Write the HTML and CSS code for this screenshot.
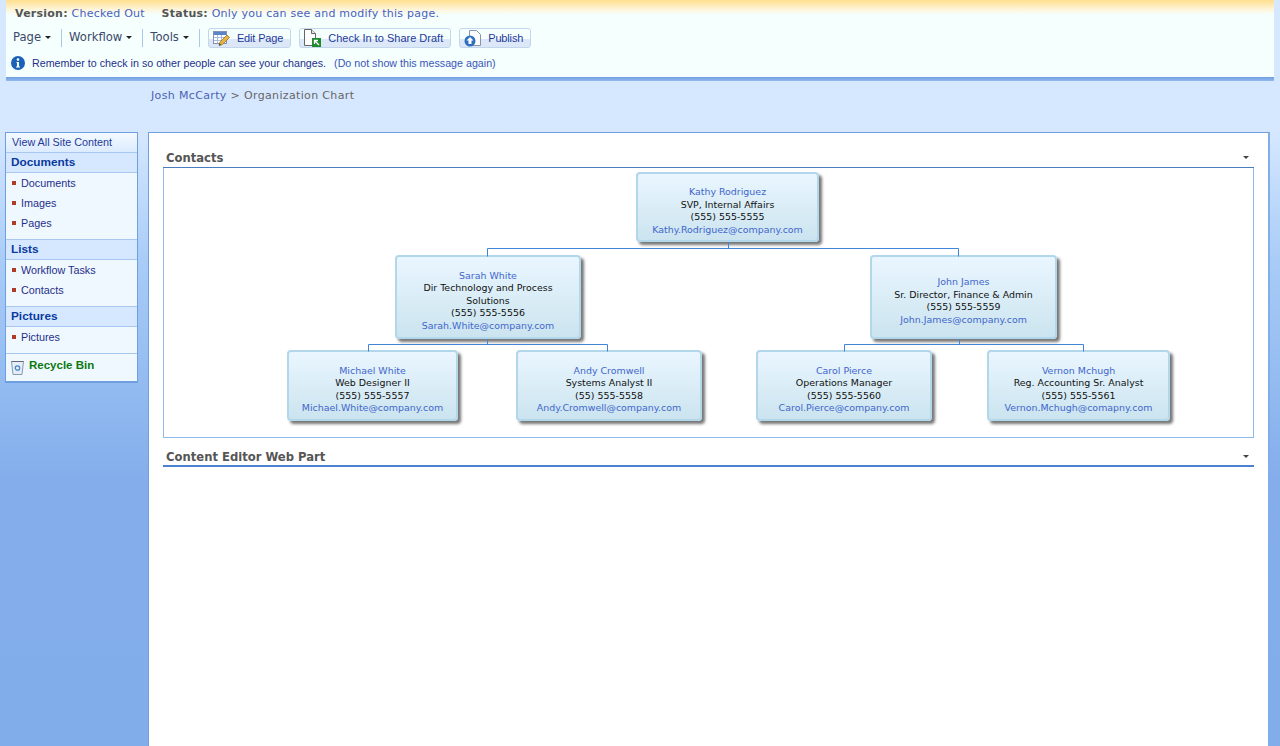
FILE: index.html
```html
<!DOCTYPE html>
<html lang="en">
<head>
    <meta charset="UTF-8">
    <title>Organization Chart</title>
    <link rel="stylesheet" href="styles.css">
</head>
<body>
    <div class="console">
        <div class="status-line">
            <b>Version:</b> <span class="status-val">Checked Out</span>
            <b class="status-gap">Status:</b> <span class="status-val">Only you can see and modify this page.</span>
        </div>
        <div class="toolbar">
            <span class="menu">Page <i class="caret"></i></span>
            <span class="menu">Workflow <i class="caret"></i></span>
            <span class="menu last">Tools <i class="caret"></i></span>
            <span class="btn tight">
                <svg width="17" height="16" viewBox="0 0 17 16"><rect x=".5" y="1.500" width="13" height="12" fill="#fff" stroke="#7f93b4"/><rect x="1" y="2" width="12" height="3" fill="#5b83c6"/><path d="M1 7.500h12M1 10.500h12M4.500 5v8M8.500 5v8" stroke="#a9bcd8"/><path d="M6 15.500l1-3.500 7-7 2.500 2.500-7 7z" fill="#e9b23f" stroke="#8b6b22" stroke-width=".7"/><path d="M6 15.500l.6-2 1.400 1.400z" fill="#333"/></svg>
                Edit Page
            </span>
            <span class="btn">
                <svg width="17" height="18" viewBox="0 0 17 18"><path d="M.5.500h7l4 4v12h-11z" fill="#fff" stroke="#666"/><path d="M7.500.500v4h4" fill="#e6e6e6" stroke="#666"/><rect x="8" y="9" width="9" height="9" fill="#1f8a2e"/><path d="M15 16l-4-4M10.500 15v-3.500h3.500" stroke="#fff" stroke-width="1.300" fill="none"/></svg>
                Check In to Share Draft
            </span>
            <span class="btn tight">
                <svg width="17" height="17" viewBox="0 0 17 17"><path d="M5.500.500h7l4 4v11h-11z" fill="#fff" stroke="#8a94a8"/><circle cx="6" cy="11" r="5.500" fill="#2f6fc0"/><path d="M6 7l3.500 3.500h-2v3.500h-3v-3.500h-2z" fill="#fff"/></svg>
                Publish
            </span>
        </div>
        <div class="notice">
            <svg width="14" height="14" viewBox="0 0 14 14"><circle cx="7" cy="7" r="7" fill="#1a62b8"/><circle cx="7" cy="3.600" r="1.300" fill="#fff"/><path d="M5.500 6h2.500v4.500h1v1h-4v-1h1v-3.500h-.500z" fill="#fff"/></svg>
            <span class="notice-text">Remember to check in so other people can see your changes.</span>
            <span class="notice-link">(Do not show this message again)</span>
        </div>
    </div>
    <div class="console-shadow"></div>

    <div class="crumbs"><span class="crumb-link">Josh McCarty</span> &gt; Organization Chart</div>

    <div class="page">
        <nav class="side">
            <div class="side-top">View All Site Content</div>
            <div class="side-head">Documents</div>
            <ul class="side-list">
                <li>Documents</li>
                <li>Images</li>
                <li>Pages</li>
            </ul>
            <div class="side-head">Lists</div>
            <ul class="side-list">
                <li>Workflow Tasks</li>
                <li>Contacts</li>
            </ul>
            <div class="side-head">Pictures</div>
            <ul class="side-list">
                <li>Pictures</li>
            </ul>
            <div class="recycle">
                <svg width="13" height="15" viewBox="0 0 13 15"><path d="M.5 1.500h12l-1.500 13h-9z" fill="#e4eef8" stroke="#8a9ab0"/><path d="M.5 1.500h12" stroke="#667"/><circle cx="6.500" cy="8" r="2.200" fill="none" stroke="#4a86c8" stroke-width="1.300"/></svg>
                <span>Recycle Bin</span>
            </div>
        </nav>

        <main class="content">
            <div class="part-title">
                <span>Contacts</span>
                <i class="caret dark"></i>
            </div>
            <div class="chart">
                <svg class="lines" width="1089" height="269" viewBox="0 0 1089 269">
                    <path d="M564.500 74v6.500M323.500 80.500h471M323.500 80.500v8M794.500 80.500v8M323.500 171v5.500M204.500 176.500h239M204.500 176.500v7M443.500 176.500v7M795.500 171v5.500M680.500 176.500h239M680.500 176.500v7M919.500 176.500v7" fill="none" stroke="#3f86d8"/>
                </svg>
                <div class="node n-kathy">
                    <span class="name">Kathy Rodriguez</span>
                    <span>SVP, Internal Affairs</span>
                    <span>(555) 555-5555</span>
                    <span class="name">Kathy.Rodriguez@company.com</span>
                </div>
                <div class="node n-sarah">
                    <span class="name">Sarah White</span>
                    <span>Dir Technology and Process Solutions</span>
                    <span>(555) 555-5556</span>
                    <span class="name">Sarah.White@company.com</span>
                </div>
                <div class="node n-john">
                    <span class="name">John James</span>
                    <span>Sr. Director, Finance &amp; Admin</span>
                    <span>(555) 555-5559</span>
                    <span class="name">John.James@company.com</span>
                </div>
                <div class="node n-michael">
                    <span class="name">Michael White</span>
                    <span>Web Designer II</span>
                    <span>(555) 555-5557</span>
                    <span class="name">Michael.White@company.com</span>
                </div>
                <div class="node n-andy">
                    <span class="name">Andy Cromwell</span>
                    <span>Systems Analyst II</span>
                    <span>(55) 555-5558</span>
                    <span class="name">Andy.Cromwell@company.com</span>
                </div>
                <div class="node n-carol">
                    <span class="name">Carol Pierce</span>
                    <span>Operations Manager</span>
                    <span>(555) 555-5560</span>
                    <span class="name">Carol.Pierce@company.com</span>
                </div>
                <div class="node n-vernon">
                    <span class="name">Vernon Mchugh</span>
                    <span>Reg. Accounting Sr. Analyst</span>
                    <span>(555) 555-5561</span>
                    <span class="name">Vernon.Mchugh@comapny.com</span>
                </div>
            </div>
            <div class="part-title second">
                <span>Content Editor Web Part</span>
                <i class="caret dark"></i>
            </div>
        </main>
    </div>
</body>
</html>
```

FILE: styles.css
```css
body {
    margin: 0;
    height: 746px;
    overflow: hidden;
    display: flex;
    flex-direction: column;
    font-family: "DejaVu Sans", Verdana, sans-serif;
    font-size: 10px;
    background: linear-gradient(#d6e8ff 0, #d6e8ff 130px, #a9ccf7 260px, #90b9f0 400px, #83aeeb 480px, #82adeb 746px);
}
.console {
    margin: 0 6px;
    height: 77px;
    box-sizing: border-box;
    background: linear-gradient(#ffdf8e 0, #fdf6de 10px, #f5fffe 15px);
    padding-top: 7px;
}
.console-shadow {
    margin: 0 6px;
    height: 4px;
    background: linear-gradient(#6f9fe4, #93b9ee);
}
.status-line {
    padding-left: 9px;
    height: 14px;
    line-height: 14px;
    font-size: 11px;
    letter-spacing: .24px;
}
.status-line b {
    color: #555;
}
.status-line .status-gap {
    margin-left: 13px;
}
.status-val {
    color: #4a5fc0;
}
.toolbar {
    display: flex;
    align-items: center;
    height: 22px;
    margin-top: 6px;
    padding-left: 1px;
    font-family: "Liberation Sans", Arial, sans-serif;
    font-size: 11px;
}
.menu {
    display: flex;
    align-items: center;
    gap: 4px;
    height: 18px;
    box-sizing: border-box;
    padding: 0 10px 2px 6px;
    color: #3a4a6a;
    border-right: 1px solid #a9c8ec;
    font-family: "DejaVu Sans", sans-serif;
    font-size: 11.600px;
}
.menu + .menu {
    padding-left: 7px;
}
.menu.last {
    margin-right: 8px;
}
.caret {
    display: inline-block;
    width: 0;
    height: 0;
    border: 3px solid transparent;
    border-top: 3px solid #222;
    border-bottom: 0;
}
.caret.dark {
    border-top-color: #444;
}
.btn {
    display: flex;
    align-items: center;
    height: 20px;
    box-sizing: border-box;
    border: 1px solid #c4d6ec;
    border-radius: 3px;
    background: linear-gradient(#f5fffe 55%, #dce8f8 55%);
    color: #1f3a9a;
    margin-right: 8px;
    padding: 0 7px 0 4px;
    gap: 7px;
}
.btn.tight {
    letter-spacing: -.15px;
}
.notice {
    display: flex;
    align-items: center;
    margin-top: 7px;
    padding-left: 5px;
    height: 14px;
    font-family: "Liberation Sans", Arial, sans-serif;
    font-size: 10.700px;
}
.notice-text {
    margin-left: 7px;
    color: #1f2f8a;
}
.notice-link {
    margin-left: 8px;
    color: #3a55b8;
}
.crumbs {
    margin-left: 151px;
    margin-top: 8px;
    height: 14px;
    line-height: 14px;
    font-size: 11px;
    letter-spacing: .35px;
    color: #666;
}
.crumb-link {
    color: #4a62b0;
}
.page {
    flex: 1;
    display: flex;
    align-items: stretch;
    min-height: 0;
    margin-top: 29px;
    padding-left: 5px;
}
.side {
    align-self: flex-start;
    width: 133px;
    box-sizing: border-box;
    border: 1px solid #6f9fe0;
    border-bottom-width: 2px;
    background: #f0f8ff;
    font-family: "Liberation Sans", Arial, sans-serif;
    font-size: 10.800px;
}
.side-top {
    height: 19px;
    line-height: 19px;
    padding-left: 6px;
    color: #1f3a9a;
    background: linear-gradient(#f4faff, #dcebfe);
    border-bottom: 1px solid #a8c8f2;
}
.side-head {
    height: 19px;
    line-height: 19px;
    padding-left: 5px;
    font-size: 11.800px;
    font-weight: bold;
    color: #0a3aa0;
    background: #d6e8ff;
    border-bottom: 1px solid #a8c8f2;
}
.side-list {
    list-style: none;
    margin: 0;
    padding: 0 0 6px;
    border-bottom: 1px solid #a8c8f2;
}
.side-list li {
    height: 20px;
    line-height: 20px;
    padding-left: 15px;
    color: #1f2f8a;
    position: relative;
}
.side-list li::before {
    content: "";
    position: absolute;
    left: 6px;
    top: 8px;
    width: 4px;
    height: 4px;
    background: #b03a28;
}
.recycle {
    display: flex;
    align-items: center;
    gap: 5px;
    height: 27px;
    box-sizing: border-box;
    padding: 0 0 5px 5px;
    font-size: 11.500px;
    font-weight: bold;
    color: #0a7a10;
}
.recycle svg {
    margin-top: 5px;
}
.content {
    width: 1122px;
    box-sizing: border-box;
    margin-left: 10px;
    background: #fff;
    border: 1px solid #6f9fe0;
    border-bottom: 0;
    border-right: 2px solid #80aee8;
    padding: 0 14px;
}
.part-title {
    display: flex;
    justify-content: space-between;
    align-items: center;
    height: 35px;
    box-sizing: border-box;
    padding: 15px 5px 0 3px;
    font-size: 11.600px;
    font-weight: bold;
    color: #555;
    border-bottom: 1px solid #4a7cc0;
}
.part-title.second {
    height: 29px;
    padding-top: 10px;
    border-bottom: 2px solid #4a82d0;
}
.chart {
    position: relative;
    height: 270px;
    box-sizing: border-box;
    border: 1px solid #8fb8ec;
    border-top: 0;
}
.lines {
    position: absolute;
    z-index: 1;
    left: 0;
    top: 0;
}
.node {
    position: absolute;
    box-sizing: border-box;
    display: flex;
    flex-direction: column;
    justify-content: center;
    text-align: center;
    padding: 8px 12px 0;
    border: 2px solid #b2d6ea;
    border-radius: 4px;
    background: linear-gradient(#eaf6ff, #cbe4ef);
    box-shadow: 3px 3px 3px #777;
    font-size: 9.450px;
    line-height: 12.500px;
    color: #111;
}
.node .name {
    color: #3f66cc;
}
.n-kathy { left: 472px; top: 4px; width: 183px; height: 70px; }
.n-sarah { left: 231px; top: 87px; width: 186px; height: 84px; }
.n-john { left: 706px; top: 87px; width: 187px; height: 84px; }
.n-michael { left: 123px; top: 182px; width: 171px; height: 71px; }
.n-andy { left: 352px; top: 182px; width: 186px; height: 71px; }
.n-carol { left: 592px; top: 182px; width: 176px; height: 71px; }
.n-vernon { left: 823px; top: 182px; width: 183px; height: 71px; }
```
